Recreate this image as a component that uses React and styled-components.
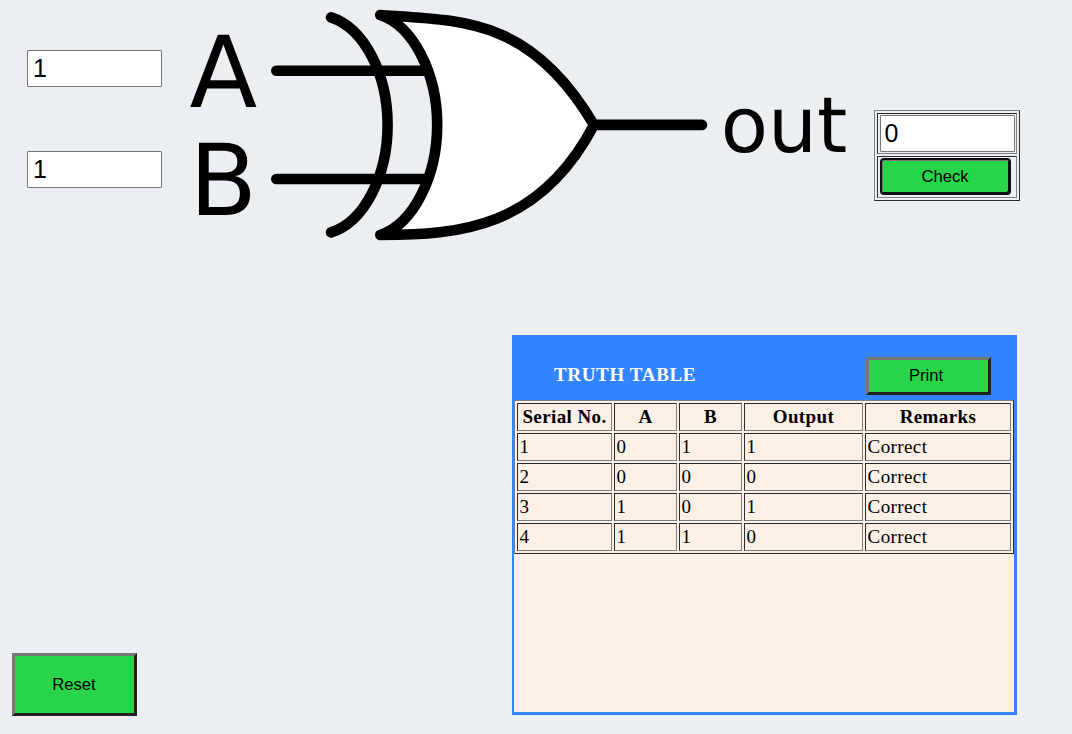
import React from "react";
import styled, { createGlobalStyle } from "styled-components";

const GlobalStyle = createGlobalStyle`
  *, *::before, *::after { box-sizing: border-box; }
  body {
    margin: 0;
    background: #ebeff4;
    color: #000;
    font-family: "Liberation Serif", "Times New Roman", serif;
    font-size: 19px;
    letter-spacing: 0.4px;
  }
`;

const Page = styled.div`
  width: 1072px;
  height: 734px;
  overflow: hidden;
  display: flex;
  flex-direction: column;
`;

const Circuit = styled.section`
  display: flex;
  align-items: flex-start;
  height: 335px;
  padding-left: 27px;
`;

const Inputs = styled.div`
  display: flex;
  flex-direction: column;
  gap: 64px;
  padding-top: 50px;
`;

const Field = styled.input`
  display: block;
  width: 135px;
  height: 37px;
  margin: 0;
  padding: 1px 3px 1px 5px;
  border: 1px solid #767676;
  border-radius: 1px;
  background: #fff;
  color: #000;
  font: 25px "Liberation Sans", Arial, sans-serif;
`;

const OutputField = styled(Field)`
  padding-left: 3.5px;
`;

const Gate = styled.svg`
  display: block;
  flex: none;
  width: 712px;
  height: 250px;
  letter-spacing: 0;
`;

const GateLabel = styled.text`
  font-family: "DejaVu Sans", sans-serif;
  font-size: ${(p) => p.$size}px;
  text-rendering: geometricPrecision;
`;

const CheckTable = styled.table`
  width: 146px;
  height: 91px;
  margin-top: 110px;
  border: 1px outset #808080;
  border-spacing: 2px;
`;

const CheckCell = styled.td`
  height: ${(p) => p.$height}px;
  padding: 1px 0 0 2px;
  border: 1px inset #808080;
  vertical-align: top;
`;

const Button = styled.button`
  display: block;
  flex: none;
  width: 125px;
  height: ${(p) => p.$height}px;
  margin: 0;
  padding: 0 ${(p) => p.$shift || 1}px 0 0;
  border: 3px solid;
  border-color: #767676 #212121 #212121 #767676;
  background: #28d549;
  color: #000;
  font: 16.667px "Liberation Sans", Arial, sans-serif;
`;

const FocusedButton = styled(Button)`
  width: 131px;
  border: 2px solid #101010;
  border-radius: 4px;
  box-shadow: inset -1px -1px #101010, inset 1px 1px #767676;
`;

const Lower = styled.section`
  display: flex;
  align-items: flex-start;
  justify-content: space-between;
  height: 399px;
  padding: 0 55px 0 12px;
`;

const ResetSlot = styled.div`
  padding-top: 318px;
`;

const Panel = styled.div`
  width: 505px;
  height: 380px;
  border: solid #3385ff;
  border-width: 0 3px 3px 2px;
  background: #faf0e6;
`;

const PanelHeader = styled.header`
  display: flex;
  align-items: flex-start;
  justify-content: space-between;
  height: 65px;
  padding: 22px 23px 0 40px;
  background: #3385ff;
`;

const Title = styled.h1`
  margin: 6px 0 0;
  color: #fff;
  font-size: 19px;
  line-height: 24px;
  letter-spacing: 0.65px;
`;

const TruthTable = styled.table`
  width: 500px;
  table-layout: fixed;
  border: 1px outset #808080;
  border-spacing: 2px;
`;

const Cell = styled.td`
  height: 28px;
  padding: 0 1px 0 1.6px;
  border: 1px inset #808080;
  line-height: 24px;
  text-align: left;
`;

const HeadCell = styled(Cell)`
  width: ${(p) => p.$width}px;
  padding: 0 1px;
  font-weight: bold;
  text-align: center;
`;

const columns = [
  ["Serial No.", 95],
  ["A", 63],
  ["B", 63],
  ["Output", 119],
  ["Remarks", 146],
];

const rows = [
  [1, 0, 1, 1, "Correct"],
  [2, 0, 0, 0, "Correct"],
  [3, 1, 0, 1, "Correct"],
  [4, 1, 1, 0, "Correct"],
];

function XorGate() {
  return (
    <Gate viewBox="162 0 712 250">
      <g fill="none" stroke="#000" strokeWidth="10.6" strokeLinecap="round" strokeLinejoin="round">
        <path d="M276.3 70.7H432M276.3 179H432M594 124.9H702" />
        <path d="M331 17.4C364 28 387.6 74 387.6 125S364 222 331 232.4" />
        <path
          fill="#fff"
          d="M380.3 15C463 20.5 531 18 594 124.9C540 228 460 235 380.3 235C413.5 224 437.2 176 437.2 125S413.5 26 380.3 15Z"
        />
      </g>
      <GateLabel $size={99} x="189.6" y="107.4">A</GateLabel>
      <GateLabel $size={99} x="189.3" y="215.4">B</GateLabel>
      <GateLabel $size={77.3} x="720.8" y="151.8">out</GateLabel>
    </Gate>
  );
}

export default function App() {
  return (
    <Page>
      <GlobalStyle />
      <Circuit>
        <Inputs>
          <Field defaultValue="1" aria-label="A" />
          <Field defaultValue="1" aria-label="B" />
        </Inputs>
        <XorGate />
        <CheckTable>
          <tbody>
            <tr>
              <CheckCell $height={41}>
                <OutputField defaultValue="0" aria-label="out" />
              </CheckCell>
            </tr>
            <tr>
              <CheckCell $height={42}>
                <FocusedButton $height={37}>Check</FocusedButton>
              </CheckCell>
            </tr>
          </tbody>
        </CheckTable>
      </Circuit>
      <Lower>
        <ResetSlot>
          <Button $height={63}>Reset</Button>
        </ResetSlot>
        <Panel>
          <PanelHeader>
            <Title>TRUTH TABLE</Title>
            <Button $height={38} $shift={5}>Print</Button>
          </PanelHeader>
          <TruthTable>
            <thead>
              <tr>
                {columns.map(([name, width]) => (
                  <HeadCell as="th" key={name} $width={width}>{name}</HeadCell>
                ))}
              </tr>
            </thead>
            <tbody>
              {rows.map((row) => (
                <tr key={row[0]}>
                  {row.map((value, i) => (
                    <Cell key={i}>{value}</Cell>
                  ))}
                </tr>
              ))}
            </tbody>
          </TruthTable>
        </Panel>
      </Lower>
    </Page>
  );
}
